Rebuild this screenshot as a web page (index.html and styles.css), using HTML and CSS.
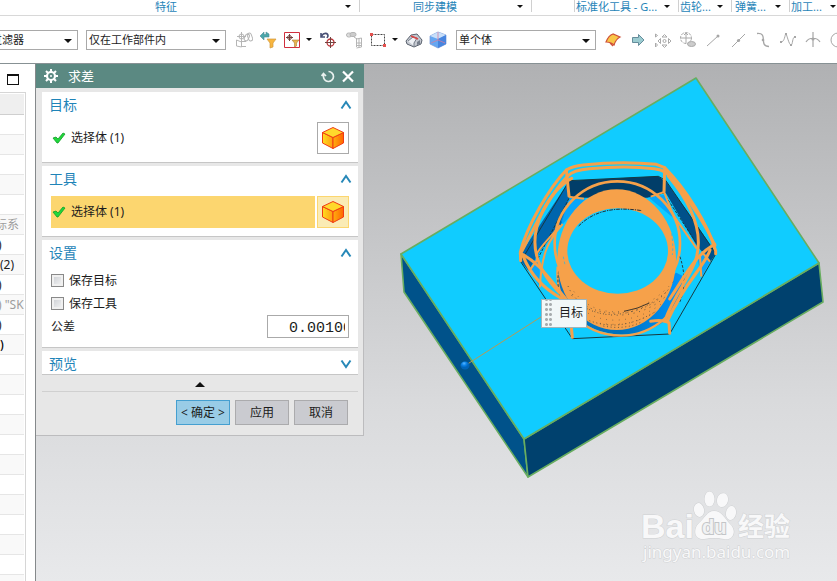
FILE: index.html
```html
<!DOCTYPE html>
<html lang="zh-CN">
<head>
<meta charset="utf-8">
<title>求差</title>
<link rel="stylesheet" href="styles.css">
</head>
<body>
<div class="app">
  <header class="ribbon">
    <div class="group group-center group-first"><span class="group-name">特征</span><i class="caret"></i></div>
    <div class="group group-center"><span class="group-name">同步建模</span><i class="caret"></i></div>
    <div class="group"></div>
    <div class="group"><span class="group-name">标准化工具 - G...</span><i class="caret"></i></div>
    <div class="group"><span class="group-name">齿轮...</span><i class="caret"></i></div>
    <div class="group group-inset"><span class="group-name">弹簧...</span><i class="caret"></i></div>
    <div class="group"><span class="group-name">加工...</span><i class="caret"></i></div>
  </header>

  <div class="toolbar">
    <div class="combo combo-filter"><select aria-label="过滤器"><option>过滤器</option></select></div>
    <div class="combo combo-scope"><select aria-label="选择范围"><option>仅在工作部件内</option></select></div>
    <div class="tools">
      <button class="tool" aria-label="装配"><svg viewBox="0 0 18 18"><g fill="none" stroke="#b5b5b5"><path d="M6.500 1v15M2 5.500h9M6 10.500h5M6 15.500h5M1.500 9l5 2M1.500 9v6l5 1"/><circle cx="6.500" cy="5.500" r="2.500"/><rect x="10" y="3" width="4" height="7" rx="2" transform="rotate(25 12 6)"/><rect x="13" y="2" width="4" height="8" rx="2" transform="rotate(-20 15 6)"/></g></svg></button>
      <button class="tool" aria-label="重置过滤器"><svg viewBox="0 0 18 18"><path d="M1 5l4-4v2.500h2V1l3 2v3H5v3z" fill="#4ba7aa" stroke="#4d8d95" stroke-width=".6"/><path d="M8 8h9l-3 4v4l-3 1v-5z" fill="#f8b63f" stroke="#d19a3d" stroke-width=".7"/></svg></button>
      <button class="tool" aria-label="点过滤器"><svg viewBox="0 0 18 18"><path d="M1.500 1.500h15v15h-15z" fill="#fff" stroke="#d02f3d"/><g fill="none" stroke="#73423e"><circle cx="6.500" cy="6.500" r="2"/><path d="M6.500 3v7M3 6.500h7"/></g><path d="M9 9h7l-2.500 3v3l-2 1v-4z" fill="#e9b44d" stroke="#a88037" stroke-width=".6"/></svg></button>
      <i class="caret"></i>
      <button class="tool tool-offset" aria-label="撤销"><svg viewBox="0 0 18 18"><path d="M2 2v4h4M2.500 5C5 1 9 2 9 5L8 7" fill="none" stroke="#485075" stroke-width="1.600"/><g fill="none" stroke="#bd3439"><circle cx="11.500" cy="11.500" r="3.500" stroke-width="1.300"/><path d="M11.500 6v11M6 11.500h11" stroke="#704541"/></g></svg></button>
      <button class="tool tool-offset" aria-label="部件树"><svg viewBox="0 0 18 18"><g fill="none" stroke="#b5b5b5"><rect x="1.500" y="2" width="5" height="4" rx="2" fill="#ddd"/><rect x="5" y="1.500" width="6" height="4" rx="2" fill="#ccc"/><path d="M9 6l3 2M11.500 7v9M11.500 8l5-1v9l-5 1M11.500 12h5M11.500 14.500h5M14 7.500v9"/></g></svg></button>
      <button class="tool" aria-label="矩形选择"><svg viewBox="0 0 18 18"><path d="M2.500 3.500h13v11h-13z" fill="none" stroke="#444" stroke-dasharray="2 1"/><path d="M1 2h3v3H1zM14 13h3v3h-3z" fill="#e4504e"/></svg></button>
      <i class="caret"></i>
      <button class="tool tool-offset" aria-label="实体"><svg viewBox="0 0 18 18"><path d="M1 10l5-6 6-1 5 6-1 4-7 3-7-3z" fill="#c5c9d1" stroke="#5a626e"/><path d="M3 10l5-4 4 1-3 5v3" fill="#eef1f5" stroke="#747c88"/><path d="M6 5l7 3" stroke="#db4746" stroke-width="1.600"/><path d="M12 11l3-2v4l-3 1z" fill="#777f8c"/></svg></button>
      <button class="tool" aria-label="立方体"><svg viewBox="0 0 18 18"><path d="M1 5l8-4 8 3v9l-8 4-8-4z" fill="#65a7f2" stroke="#7796d5" stroke-width=".7"/><path d="M1 5l8-4 8 3-8 4z" fill="#c9dff9"/><path d="M9 8l8-4v9l-8 4z" fill="#4785df"/><path d="M9 1v8l7 3M9 9l-7 3" fill="none" stroke="#d17da2" stroke-width=".8"/></svg></button>
    </div>
    <div class="combo combo-body"><select aria-label="体类型"><option>单个体</option></select></div>
    <div class="tools tools-right">
      <button class="tool" aria-label="面"><svg viewBox="0 0 18 18"><path d="M2 11c2-5 4-7 7-8l7 3c-4 2-5 5-6 8-3-3-5-3-8-3zM6 12l3 3" fill="#f9c647" stroke="#cf5137" stroke-width="1.200"/></svg></button>
      <button class="tool" aria-label="下一个"><svg viewBox="0 0 18 18"><path d="M3.500 6.500h6v-3l5.500 5.500-5.500 5.500v-3h-6z" fill="#9bcbd0" stroke="#658d9b"/></svg></button>
      <button class="tool" aria-label="移动对象"><svg viewBox="0 0 18 18"><g fill="none" stroke="#aaa"><path d="M1.500 3v3l2-1.500zM1.500 12v4l2-2z"/><path d="M8 6l2.500-2.500L13 6zM8 14l2.500 2.500L13 14zM6.500 7.500L4 10l2.500 2.500zM14.500 7.500L17 10l-2.500 2.500z"/><circle cx="10.500" cy="10" r="1.500"/></g></svg></button>
      <button class="tool" aria-label="移动面"><svg viewBox="0 0 18 18"><g fill="none" stroke="#aaa"><circle cx="7" cy="7" r="5.500" stroke-dasharray="3 1"/><path d="M7 2v10M2 7h10M5 4l2-2 2 2"/><ellipse cx="12.500" cy="13" rx="4" ry="2.500" fill="#ccc"/></g></svg></button>
      <button class="tool" aria-label="直线"><svg viewBox="0 0 18 18"><path d="M3 15L14 5" stroke="#a6a6a6"/><circle cx="14" cy="5" r="1.500" fill="#a6a6a6"/></svg></button>
      <button class="tool" aria-label="中点"><svg viewBox="0 0 18 18"><path d="M3 16L16 3" stroke="#a6a6a6"/><circle cx="9.500" cy="9.500" r="1.600" fill="#a6a6a6"/></svg></button>
      <button class="tool" aria-label="曲线"><svg viewBox="0 0 18 18"><path d="M3 2.500c12-1 1 13 12 13" fill="none" stroke="#a6a6a6" stroke-width="1.300"/><circle cx="9" cy="9" r="1.300" fill="#a6a6a6"/></svg></button>
      <button class="tool" aria-label="样条"><svg viewBox="0 0 18 18"><path d="M2 11c4 0 4-9 5-8s3 11 5 11 1-8 4-8" fill="none" stroke="#a6a6a6"/><path d="M1 10h2v2H1zM6 2h2v2H6zM11 13h2v2h-2zM15 5h2v2h-2z" fill="#a6a6a6"/></svg></button>
      <button class="tool" aria-label="交点"><svg viewBox="0 0 18 18"><path d="M9 1v15M2 11c3-5 11-5 14 0" fill="none" stroke="#a6a6a6" stroke-width="1.200"/><circle cx="9" cy="8" r="1.600" fill="#a6a6a6"/></svg></button>
      <button class="tool" aria-label="圆"><svg viewBox="0 0 18 18"><circle cx="9" cy="9" r="7" fill="none" stroke="#a6a6a6"/></svg></button>
    </div>
  </div>

  <div class="workspace">
    <aside class="navigator">
      <button class="maximize" aria-label="最大化"></button>
      <div class="tree-frame">
      <table class="tree">
        <thead><tr><th></th></tr></thead>
        <tbody>
          <tr><td></td></tr><tr><td></td></tr><tr><td></td></tr><tr><td></td></tr><tr><td></td></tr>
          <tr><td class="muted">标系</td></tr>
          <tr><td class="tail">)</td></tr>
          <tr><td>(2)</td></tr>
          <tr><td class="tail">)</td></tr>
          <tr><td class="muted tail">) "SK</td></tr>
          <tr><td class="tail">)</td></tr>
          <tr><td class="strong">)</td></tr>
          <tr><td></td></tr><tr><td></td></tr><tr><td></td></tr><tr><td></td></tr><tr><td></td></tr><tr><td></td></tr>
          <tr><td></td></tr><tr><td></td></tr><tr><td></td></tr><tr><td></td></tr><tr><td></td></tr><tr><td></td></tr>
        </tbody>
      </table>
      </div>
    </aside>

    <main class="viewport">
      <svg class="scene" viewBox="36 64 801 517" preserveAspectRatio="xMinYMin slice">
        <defs>
          <radialGradient id="ball" cx=".4" cy=".25"><stop offset="0" stop-color="#55b5ff"/><stop offset=".5" stop-color="#0b83e8"/><stop offset="1" stop-color="#0064b8"/></radialGradient>
          <linearGradient id="rim" x2="1"><stop offset="0" stop-color="#0575c4"/><stop offset=".5" stop-color="#0071bd"/><stop offset="1" stop-color="#0096ff"/></linearGradient>
        </defs>
        <g stroke="#68ad60" stroke-width="1.600" stroke-linejoin="round">
          <path fill="#00528a" d="M401 254l123 185 4 38-124-185z"/>
          <path fill="#00416e" d="M524 439l295-176 4 39-295 175z"/>
          <path fill="#10ccff" d="M401 254L696 78l123 185-295 176z"/>
        </g>
        <g transform="translate(500 150) scale(.333333)" fill="none">
          <path fill="#013e69" d="M207 92l268-13 22 16v34l-55 14H207z"/>
          <path fill="#0065ad" d="M203 100l5 42-25 84-62 76-36 60-24-30 2-22z"/>
          <path fill="#00508a" d="M497 92l98 140 53 78-17 25-42-50-92-157z"/>
          <path fill="#0799f8" d="M208 145l50 0-70 78-5-10zM445 142l48-8 30 72zM591 320l28-10 12 25-26 45zM90 360l28-58 2 110z" opacity=".75"/>
          <g stroke="#17383f" stroke-width="3">
            <path d="M207 92l268-13 22 12 151 220-139 241-292 14L62 335l141-235"/>
            <path d="M490 128l105 160M207 145l-97 188" stroke-dasharray="9 4"/>
          </g>
          <ellipse cx="360" cy="385" rx="190" ry="172" fill="#10ccff"/>
          <path d="M173 360c-4 60 28 134 92 168 80 44 194 28 244-30 36-42 42-80 40-120l-20-10-180 100z" fill="url(#rim)"/>
          <ellipse cx="352" cy="280" rx="188" ry="186" stroke="#f6a14a" stroke-width="8"/>
          <path d="M173 350c-10 110 70 206 190 207 90 0 190-70 187-179" stroke="#f6a14a" stroke-width="7"/>
          <path d="M178 350c-12 60 4 110 20 120M540 320c22 70 10 110-2 140" stroke="#24414a" stroke-width="3" stroke-dasharray="8 5"/>
          <ellipse cx="350" cy="329" rx="178" ry="211" fill="#f6a14a"/>
          <ellipse cx="353" cy="303" rx="151" ry="128" fill="#10ccff"/>
          <path d="M236 228c45-45 105-59 190-46" stroke="#25313a" stroke-width="3" stroke-dasharray="11 3 4 3"/>
          <path d="M448 459q-34 18-76 25" stroke="#3e3429" stroke-width="3"/>
          <g stroke="#6d593f" stroke-width="3">
            <path stroke-dasharray="3 11" d="M204 408c40 105 230 110 305 5"/>
            <path stroke-dasharray="3 14" d="M215 436c54 76 200 82 283 2M246 467c70 48 180 30 262-50"/>
            <path stroke-dasharray="3 8" d="M268 512c60 22 120 18 195-25M310 528c40 8 80 5 114-12"/>
            <path stroke-dasharray="2 17" d="M222 425c70 90 205 80 302-35M300 520c70 10 130-5 180-45M265 490c65 38 155 20 222-30"/>
          </g>
          <g stroke="#f6a14a" stroke-width="9" stroke-linejoin="round" stroke-linecap="round">
            <path d="M62 332l-1-26C80 230 148 112 199 60q20-12 50-15 115-13 220-2l25 10c65 66 130 170 153 250l0 8"/>
            <path d="M65 305C110 220 145 140 203 78c15-16 40-20 65-22 70-6 140-6 195 0 28 3 42 14 60 38 60 76 98 140 122 192"/>
            <path d="M199 60l8 78M494 53l-2 72"/>
            <path d="M215 85C150 120 80 235 114 330c18 52 54 88 82 116M505 78c50 60 110 150 84 245-16 60-62 100-95 190"/>
            <path d="M61 310c55 25 90 80 135 135M644 282c-60 35-85 90-135 165"/>
            <path d="M70 320c24 60 66 98 112 124M630 300c-16 50-76 96-126 210M217 562l-4-40M509 550l-2-32q-20-10-55-4"/>
          </g>
          <path d="M207 140l45 6M452 140l40-14 28 70 70 100M188 222c-34 40-64 75-68 190M600 320l4 60M90 360l25-35M630 335l-25-30M180 225c-22 30-60 65-72 90" stroke="#f6a14a" stroke-width="6"/>
          <path d="M515 250c4 30 4 50 2 65M190 320l5 25" stroke="#22b7e8" stroke-width="2" stroke-dasharray="8 7"/>
        </g>
        <path d="M466 365l78-50" stroke="#b59b55"/>
        <ellipse cx="465" cy="365.500" rx="4.500" ry="4" fill="url(#ball)"/>
        <g class="watermark">
          <text class="mark-main" x="641" y="538">Bai</text>
          <g class="mark-shape"><ellipse cx="699" cy="510" rx="5" ry="7" transform="rotate(-12 699 510)"/><ellipse cx="709.500" cy="499" rx="5" ry="7.500"/><ellipse cx="722.500" cy="500" rx="5.500" ry="7" transform="rotate(15 722 500)"/><ellipse cx="731" cy="513" rx="5" ry="7" transform="rotate(10 731 513)"/><path d="M714 511c8 0 11 8 16 13 8 8 2 17-6 15q-10-2-20 0c-10 1-11-10-5-16 6-5 8-12 15-12z"/></g>
          <text class="mark-du" x="702" y="534">du</text>
          <text class="mark-cn" x="738" y="536">经验</text>
          <text class="mark-url" x="643" y="558">jingyan.baidu.com</text>
        </g>
      </svg>
      <div class="callout">目标</div>

      <form class="dialog">
        <div class="title-bar">
          <svg class="gear" viewBox="0 0 14 14"><circle cx="7" cy="7" r="4" fill="none" stroke="#fff" stroke-width="2.200"/><path d="M7 0v3M7 11v3M0 7h3M11 7h3M2 2l2 2M10 10l2 2M12 2l-2 2M4 10l-2 2" stroke="#fff" stroke-width="2"/><circle cx="7" cy="7" r="1" fill="#fff"/></svg>
          <h1>求差</h1>
          <button type="button" class="title-button" aria-label="重置"><svg viewBox="0 0 14 14"><path d="M7.500 2.500A5 5 0 1 1 2.500 7V4.500M.5 7l2-2.500 2.500 2.500" fill="none" stroke="#e9f1ef" stroke-width="1.700"/></svg></button>
          <button type="button" class="title-button" aria-label="关闭"><svg viewBox="0 0 14 14"><path d="M2 2.500l10 10M12 2.500l-10 10" stroke="#fff" stroke-width="2.200"/></svg></button>
        </div>
        <div class="dialog-body">
          <section class="card">
            <h2>目标<svg class="chevron" viewBox="0 0 12 10"><path d="M1.500 8.500L6 2l4.500 6.500"/></svg></h2>
            <div class="pick">
              <span class="pick-label"><svg viewBox="0 0 14 12"><path d="M1 6l3-1 2 2 5-6 2 1-7 9H5z" fill="#1fd83c" stroke="#129d25" stroke-width=".8"/></svg>选择体 (1)</span>
              <button type="button" class="cube" aria-label="选择目标体"><svg viewBox="0 0 24 24"><use href="#cube"/></svg></button>
            </div>
          </section>
          <section class="card">
            <h2>工具<svg class="chevron" viewBox="0 0 12 10"><path d="M1.500 8.500L6 2l4.500 6.500"/></svg></h2>
            <div class="pick pick-active">
              <span class="pick-label"><svg viewBox="0 0 14 12"><path d="M1 6l3-1 2 2 5-6 2 1-7 9H5z" fill="#1fd83c" stroke="#129d25" stroke-width=".8"/></svg>选择体 (1)</span>
              <button type="button" class="cube" aria-label="选择工具体"><svg viewBox="0 0 24 24">
                <defs><linearGradient id="cl" x2="1"><stop offset="0" stop-color="#ffdd20"/><stop offset="1" stop-color="#ff9b12"/></linearGradient><linearGradient id="cr" x2="1"><stop offset="0" stop-color="#ffae10"/><stop offset="1" stop-color="#ff6500"/></linearGradient>
                <g id="cube" stroke="#f03b14" stroke-linejoin="round"><path d="M1.500 6.500L12 11.500v11L1.500 17z" fill="url(#cl)"/><path d="M22.500 6.500L12 11.500v11L22.500 17z" fill="url(#cr)"/><path d="M12 1.500l10.500 5L12 11.500 1.500 6.500z" fill="#ffd92c"/></g></defs>
                <use href="#cube"/></svg></button>
            </div>
          </section>
          <section class="card card-settings">
            <h2>设置<svg class="chevron" viewBox="0 0 12 10"><path d="M1.500 8.500L6 2l4.500 6.500"/></svg></h2>
            <label class="check"><input type="checkbox">保存目标</label>
            <label class="check"><input type="checkbox">保存工具</label>
            <div class="field"><label for="tolerance">公差</label><input id="tolerance" type="text" value="0.001000"></div>
          </section>
          <section class="card">
            <h2>预览<svg class="chevron" viewBox="0 0 12 10"><path d="M1.500 1.500L6 8l4.500-6.500"/></svg></h2>
          </section>
          <button type="button" class="collapse" aria-label="折叠"></button>
          <div class="actions">
            <button type="submit" class="primary">&lt; 确定 &gt;</button>
            <button type="button">应用</button>
            <button type="button">取消</button>
          </div>
        </div>
      </form>
    </main>
  </div>
</div>
</body>
</html>
```
FILE: styles.css
```css
* {
  box-sizing: border-box;
}

body {
  margin: 0;
  color: #1c1c1c;
  font: 12px/18px "Noto Sans", "Noto Sans CJK SC", sans-serif;
}

button,
input,
select {
  margin: 0;
  padding: 0;
  color: inherit;
  font: inherit;
}

svg {
  display: block;
}

.app {
  display: flex;
  flex-direction: column;
  height: 100vh;
  overflow: hidden;
  background: #fff;
}

/* Ribbon group names */
.ribbon {
  display: grid;
  grid-template-columns: 360px 172px 43px 104px 53px 58px 1fr;
  flex: none;
  height: 16px;
  border-bottom: 1px solid #d8d8d8;
  color: #1f84b8;
  font-size: 11px;
  line-height: 13px;
}

.group {
  display: flex;
  height: 12px;
  border-right: 1px solid #d0d0d0;
  white-space: nowrap;
}

.group:last-child {
  border-right: 0;
}

.group-name {
  flex: 1;
  min-width: 0;
  padding-left: 1px;
}

.group-inset {
  padding-left: 2px;
}

.group-center {
  text-align: center;
}

.group-first {
  margin-left: -6px;
}

.caret {
  display: flex;
  flex: none;
  align-items: center;
  justify-content: center;
  width: 22px;
}

.caret::before {
  content: "";
  border: 3px solid transparent;
  border-top-color: #111;
  border-bottom: 0;
}

/* Selection toolbar */
.toolbar {
  display: flex;
  flex: none;
  align-items: center;
  height: 48px;
  overflow: hidden;
  border-bottom: 1px solid #879194;
}

.combo {
  position: relative;
  flex: none;
  height: 20px;
}

.combo select {
  display: block;
  width: 100%;
  height: 20px;
  padding-left: 2px;
  appearance: none;
  border: 1px solid #a9a9a9;
  border-radius: 0;
  background: #fff;
  font-size: 11px;
}

.combo::after {
  content: "";
  position: absolute;
  top: 9px;
  right: 6px;
  border: 4px solid transparent;
  border-top-color: #111;
  border-bottom: 0;
  pointer-events: none;
}

.combo-filter {
  width: 90px;
  margin: 0 8px 0 -12px;
}

.combo-scope {
  width: 140px;
  margin-right: 6px;
}

.combo-body {
  width: 140px;
  margin: 0 4px 0 6px;
}

.tools {
  display: flex;
  flex: none;
  align-items: center;
}

.tools .caret {
  width: 10px;
}

.tool {
  display: grid;
  flex: none;
  place-items: center;
  width: 24px;
  height: 24px;
  border: 0;
  background: none;
}

.tool-offset {
  margin-left: 2px;
}

.tools-right .tool {
  width: 25px;
}

.tool svg {
  width: 18px;
  height: 18px;
}

/* Part navigator */
.workspace {
  display: flex;
  flex: 1;
  min-height: 0;
}

.navigator {
  flex: none;
  width: 36px;
  overflow: hidden;
  border-right: 1px solid #85898b;
}

.maximize {
  display: block;
  width: 12px;
  height: 11px;
  margin: 10px 0 7px 7px;
  border: 1px solid #111;
  border-top-width: 2px;
  background: #fff;
}

.tree-frame {
  width: 26px;
  padding: 1px 1px 0 0;
  border: solid #d6d6d6;
  border-width: 1px 1px 0 0;
}

.tree {
  width: 24px;
  table-layout: fixed;
  border-collapse: separate;
  border-spacing: 0;
}

.tree th,
.tree td {
  height: 20px;
  padding: 0;
  overflow: hidden;
  border-bottom: 1px solid #e6e6e6;
  font-size: 12px;
  line-height: 19px;
  white-space: nowrap;
}

.tree th {
  height: 21px;
  border-color: #cfcfcf;
  background: #efefef;
}

.tree tr:nth-child(even) td {
  background: #f9f9f9;
}

.tree .muted {
  color: #9d9d9d;
  text-indent: -5px;
}

.tree .tail {
  text-indent: -2px;
}

.tree .strong {
  color: #000;
  font-weight: 500;
}

/* Graphics window */
.viewport {
  position: relative;
  flex: 1;
  min-width: 0;
  overflow: hidden;
  background: linear-gradient(#b0b1b3, #d9dadc 65%, #e8e9eb);
}

.scene {
  position: absolute;
  inset: 0;
  width: 100%;
  height: 100%;
}

.callout {
  position: absolute;
  top: 235px;
  left: 505px;
  height: 29px;
  padding: 0 3px 0 17px;
  border: 1px solid #9fb4bb;
  background:
    radial-gradient(circle, #a8adaf 1px, #f1f7f8 2px) 2px 2px / 5px 5px repeat-y,
    radial-gradient(circle, #a8adaf 1px, #f1f7f8 2px) 6px 2px / 5px 5px repeat-y,
    #f1f7f8;
  line-height: 26px;
}

.watermark {
  fill: #f8f8f9;
  stroke: #cfd1d3;
  stroke-width: 1px;
  paint-order: stroke;
}

.mark-main {
  font: bold 34px "Liberation Sans", sans-serif;
}

.mark-du {
  fill: #f1f2f3;
  stroke: #c3c5c7;
  stroke-width: 2px;
  font: bold 20px "Liberation Sans", sans-serif;
}

.mark-cn {
  font: bold 26px "Noto Sans CJK SC", sans-serif;
}

.mark-url {
  font: 17px "Noto Sans", sans-serif;
}

/* Subtract dialog */
.dialog {
  position: relative;
  width: 328px;
  border: solid #bcbcbe;
  border-width: 0 1px 1px 0;
  background: #e7e7e7;
}

.title-bar {
  display: flex;
  align-items: center;
  gap: 6px;
  height: 24px;
  margin-right: -1px;
  padding: 0 9px 0 8px;
  background: #5b8982;
  color: #fff;
}

.gear {
  width: 14px;
  height: 14px;
}

.title-bar h1 {
  flex: 1;
  margin: 0 0 0 4px;
  font-size: 13px;
  font-weight: normal;
}

.title-button {
  width: 14px;
  height: 14px;
  border: 0;
  background: none;
}

.title-button svg {
  width: 14px;
  height: 14px;
}

.dialog-body {
  display: flex;
  flex-direction: column;
  gap: 3px;
  padding: 4px 5px 10px 6px;
}

.card {
  min-height: 71px;
  padding: 0 9px;
  border-bottom: 1px solid #c6c6c6;
  background: #fff;
}

.card:nth-of-type(4) {
  min-height: 24px;
}

.card-settings {
  min-height: 108px;
}

.card h2 {
  display: flex;
  align-items: center;
  justify-content: space-between;
  height: 23px;
  margin: 0 0 0 -2px;
  padding: 2px 0 0;
  color: #1f84b8;
  font-size: 14px;
  font-weight: normal;
}

.chevron {
  width: 12px;
  height: 10px;
  margin-right: -3px;
  fill: none;
  stroke: #2788b8;
  stroke-width: 2px;
}

.pick {
  display: flex;
  gap: 2px;
  height: 32px;
  margin-top: 7px;
}

.pick-label {
  display: flex;
  flex: 1;
  align-items: center;
  gap: 5px;
  padding-left: 1px;
}

.pick-label svg {
  width: 14px;
  height: 12px;
}

.cube {
  display: grid;
  place-items: center;
  width: 32px;
  height: 32px;
  border: 1px solid #aaa;
  background: #fff;
}

.cube svg {
  width: 24px;
  height: 24px;
}

.pick-active .pick-label {
  background: #fcd66f;
}

.pick-active .cube {
  border-color: #fcd66f;
  background: #faebb5;
}

.check {
  display: flex;
  align-items: center;
  gap: 5px;
  height: 23px;
}

.card-settings h2 {
  margin-bottom: 6px;
}

.check input {
  width: 13px;
  height: 13px;
  appearance: none;
  border: 1px solid #898989;
  background: linear-gradient(135deg, #c8cbd0, #f7f7f7);
  box-shadow: inset 0 0 0 2px #f0f0f0;
}

.field {
  display: flex;
  align-items: center;
  justify-content: space-between;
}

.field input {
  width: 82px;
  height: 23px;
  padding: 3px 3px 0 21px;
  border: 1px solid #aaa;
  border-radius: 0;
  font: 15px "Liberation Mono", monospace;
}

.collapse {
  display: grid;
  place-items: center;
  height: 14px;
  border: 0;
  border-bottom: 1px solid #d0d0d0;
  background: none;
}

.collapse::before {
  content: "";
  border: 5px solid transparent;
  border-top: 0;
  border-bottom-color: #111;
}

.actions {
  display: flex;
  justify-content: flex-end;
  gap: 5px;
  padding: 5px 10px 0 0;
}

.actions button {
  width: 54px;
  height: 25px;
  border: 1px solid #ababad;
  background: #cacbd0;
  white-space: nowrap;
}

.actions .primary {
  border-color: #459fd0;
  background: #99cce6;
}
```
